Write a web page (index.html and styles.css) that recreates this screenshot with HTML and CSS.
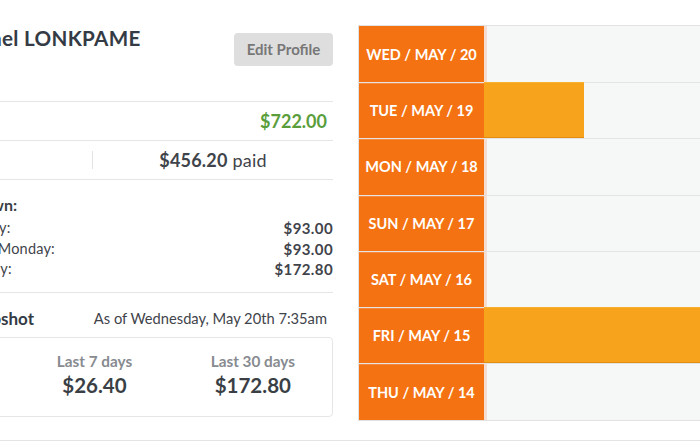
FILE: index.html
```
<!DOCTYPE html>
<html>
<head>
<meta charset="utf-8">
<link rel="stylesheet" href="styles.css">
</head>
<body>
<div class="page">
  <div class="main">
    <div class="left">
      <div class="profile-head">
        <div class="name">Michael LONKPAME</div>
        <div class="edit-btn">Edit Profile</div>
      </div>
      <div class="row total">
        <span class="total-label">Total earned</span>
        <span class="total-value">$722.00</span>
      </div>
      <div class="row paid">
        <div class="paid-cell"></div>
        <div class="divider"></div>
        <div class="paid-cell"><b>$456.20</b> paid</div>
      </div>
      <div class="breakdown">
        <div class="bd-title">Breakdown:</div>
        <div class="bd-row"><span>Sunday:</span><b>$93.00</b></div>
        <div class="bd-row"><span>Since Monday:</span><b>$93.00</b></div>
        <div class="bd-row"><span>Weekly:</span><b>$172.80</b></div>
      </div>
      <div class="snapshot">
        <div class="snap-head">
          <span class="snap-title">Snapshot</span>
          <span class="snap-date">As of Wednesday, May 20th 7:35am</span>
        </div>
        <div class="snap-box">
          <div class="snap-col"><div class="snap-label">Yesterday</div><div class="snap-value">$93.00</div></div>
          <div class="snap-col"><div class="snap-label">Last 7 days</div><div class="snap-value">$26.40</div></div>
          <div class="snap-col"><div class="snap-label">Last 30 days</div><div class="snap-value">$172.80</div></div>
        </div>
      </div>
    </div>
    <div class="right">
      <div class="chart">
        <div class="chart-row"><div class="day">WED / MAY / 20</div><div class="track"></div></div>
        <div class="chart-row"><div class="day">TUE / MAY / 19</div><div class="track"><div class="bar" style="width:100px"></div></div></div>
        <div class="chart-row"><div class="day">MON / MAY / 18</div><div class="track"></div></div>
        <div class="chart-row"><div class="day">SUN / MAY / 17</div><div class="track"></div></div>
        <div class="chart-row"><div class="day">SAT / MAY / 16</div><div class="track"></div></div>
        <div class="chart-row"><div class="day">FRI / MAY / 15</div><div class="track"><div class="bar" style="width:100%"></div></div></div>
        <div class="chart-row"><div class="day">THU / MAY / 14</div><div class="track"></div></div>
      </div>
    </div>
  </div>
  <div class="footer-line"></div>
</div>
</body>
</html>
```
FILE: styles.css
```
html, body {
  margin: 0;
  padding: 0;
  background: #fff;
  overflow: hidden;
}
body {
  font-family: Lato, "Open Sans", "Liberation Sans", sans-serif;
  color: #3a3f46;
  width: 700px;
  height: 441px;
}
.page {
  width: 700px;
  overflow: hidden;
}
.main {
  display: flex;
  height: 440px;
}
.left {
  flex: none;
  width: 477px;
  margin-left: -144px;
}
.profile-head {
  height: 101px;
  display: flex;
  justify-content: space-between;
  align-items: flex-start;
}
.name {
  margin-top: 27px;
  padding-left: 88px;
  font-size: 20.6px;
  line-height: 22px;
  font-weight: 700;
  letter-spacing: 0.3px;
  color: #343b45;
  white-space: nowrap;
}
.edit-btn {
  margin-top: 33px;
  width: 99px;
  height: 33px;
  box-sizing: border-box;
  background: #dedede;
  border-radius: 4px;
  color: #777;
  font-size: 15px;
  font-weight: 700;
  line-height: 33px;
  text-align: center;
}
.row {
  border-top: 1px solid #e6e6e6;
  height: 38px;
  display: flex;
  align-items: center;
}
.total {
  justify-content: space-between;
  padding-right: 6px;
}
.total-label {
  visibility: hidden;
}
.total-value {
  color: #5a9e3c;
  font-size: 18px;
  font-weight: 700;
}
.paid-cell {
  flex: 1;
  text-align: center;
  font-size: 18px;
  letter-spacing: 0.2px;
  color: #3f444b;
}
.paid-cell b {
  font-weight: 700;
}
.paid-cell:first-child {
  flex: none;
  width: 236px;
}
.divider {
  width: 1px;
  height: 18px;
  background: #e3e3e3;
}
.breakdown {
  border-top: 1px solid #e6e6e6;
  height: 113px;
  box-sizing: border-box;
  padding-top: 15px;
}
.bd-title {
  padding-left: 76px;
  font-size: 16px;
  font-weight: 700;
  line-height: 20px;
  margin-bottom: 3px;
}
.bd-row {
  display: flex;
  justify-content: space-between;
  padding-left: 103px;
  font-size: 14.5px;
  line-height: 20.5px;
  letter-spacing: 0.2px;
  color: #3f444b;
}
.bd-row b {
  font-weight: 700;
  font-size: 15px;
  letter-spacing: 0.4px;
}
.snapshot {
  border-top: 1px solid #e6e6e6;
  padding-top: 15px;
}
.snap-head {
  display: flex;
  justify-content: space-between;
  padding-left: 108px;
  padding-right: 6px;
  align-items: center;
  height: 20px;
  margin-bottom: 9px;
}
.snap-title {
  font-size: 17px;
  font-weight: 700;
  color: #343b45;
}
.snap-date {
  font-size: 14.7px;
  color: #3f444b;
}
.snap-box {
  border: 1px solid #e6e6e6;
  border-radius: 4px;
  height: 80px;
  box-sizing: border-box;
  padding-top: 14px;
  display: grid;
  grid-template-columns: 1fr 1fr 1fr;
}
.snap-col {
  text-align: center;
}
.snap-label {
  color: #878b90;
  font-size: 15.3px;
  font-weight: 700;
  line-height: 18px;
}
.snap-value {
  margin-top: 2px;
  font-size: 20.5px;
  font-weight: 700;
  line-height: 26px;
  color: #3a3f46;
}
.right {
  flex: none;
  margin-left: 25px;
  width: 400px;
}
.chart {
  margin-top: 25px;
  border-top: 1px solid #e2e2e2;
  border-left: 1px solid #e2e2e2;
  border-bottom: 1px solid #e2e2e2;
  display: flex;
  flex-direction: column;
}
.chart-row {
  display: flex;
  height: 55.3px;
  border-top: 1px solid #e4e4e4;
}
.chart-row:first-child {
  border-top: none;
  height: 56px;
}
.day {
  flex: none;
  width: 125px;
  background: #f47212;
  color: #fff;
  font-size: 14.5px;
  font-weight: 700;
  display: flex;
  align-items: center;
  justify-content: center;
  box-shadow: inset 0 1px 0 #f68a3c;
  white-space: nowrap;
}
.chart-row:first-child .day {
  box-shadow: none;
}
.track {
  flex: 1;
  background: #f6f7f7;
  border-left: 3px solid #f5ddd2;
  position: relative;
}
.bar {
  position: absolute;
  left: -3px;
  top: -1px;
  bottom: 0;
  background: #f7a31c;
  border-top: 1px solid #f9b030;
  border-bottom: 1px solid #e38d12;
  box-sizing: border-box;
}
.footer-line {
  height: 1px;
  background: #e4e4e4;
}
```
